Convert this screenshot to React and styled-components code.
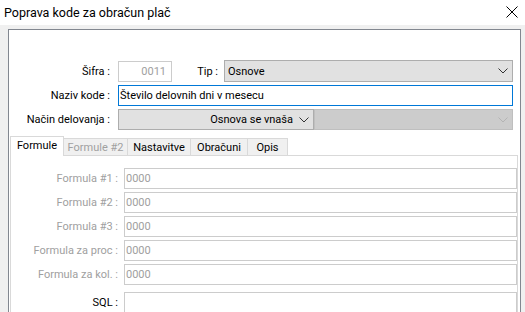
import React from 'react';
import styled, { createGlobalStyle } from 'styled-components';

const Global = createGlobalStyle`
  html, body { margin: 0; padding: 0; background: #f0f0f0; overflow: hidden; }
  body { font-family: Roboto, "Segoe UI", sans-serif; font-size: 11px; color: #000; }
  * { box-sizing: border-box; }
`;

const Window = styled.div`
  width: 525px;
  height: 312px;
  display: flex;
  flex-direction: column;
  background: #f0f0f0;
  overflow: hidden;
`;

const TitleBar = styled.div`
  height: 25px;
  flex-shrink: 0;
  background: #fff;
  display: flex;
  align-items: center;
  justify-content: space-between;
  padding: 0 7px 1px 4px;
`;

const Title = styled.span`
  font-size: 12.5px;
  color: #000;
`;

const Body = styled.div`
  flex: 1;
  min-height: 0;
  display: flex;
  flex-direction: column;
  padding: 4px 4px 0 8px;
`;

const Panel = styled.div`
  flex: 1;
  background: #fff;
  border: 1px solid #828790;
  border-bottom: none;
  padding-top: 30px;
  display: flex;
  flex-direction: column;
`;

const Form = styled.div`
  display: flex;
  flex-direction: column;
  gap: 3px;
  padding-right: 7px;
`;

const Row = styled.div`
  display: flex;
  align-items: center;
  height: ${p => p.$h || 21}px;
`;

const Label = styled.span`
  width: ${p => p.$w || 101}px;
  flex-shrink: 0;
  text-align: right;
  margin-right: ${p => p.$mr ?? 8}px;
  color: ${p => (p.$disabled ? '#a0a0a0' : '#000')};
  white-space: nowrap;
`;

const TextBox = styled.div`
  height: 21px;
  width: ${p => (p.$w ? `${p.$w}px` : 'auto')};
  flex: ${p => (p.$w ? '0 0 auto' : '1')};
  border: 1px solid ${p => (p.$focused ? '#0078d7' : '#cccccc')};
  background: #fff;
  display: flex;
  align-items: center;
  justify-content: ${p => (p.$right ? 'flex-end' : 'flex-start')};
  padding: 0 ${p => (p.$right ? 5 : 1)}px 0 1px;
  color: ${p => (p.$disabled ? '#a0a0a0' : '#000')};
  white-space: nowrap;
  overflow: hidden;
`;

const Combo = styled.div`
  height: ${p => p.$h || 21}px;
  width: ${p => (p.$w ? `${p.$w}px` : 'auto')};
  flex: ${p => (p.$w ? '0 0 auto' : '1')};
  border: 1px solid ${p => (p.$disabled ? '#bfbfbf' : '#adadad')};
  background: ${p => (p.$disabled ? '#cccccc' : '#e1e1e1')};
  display: flex;
  align-items: center;
  padding: 0 0 0 3px;
  color: #000;
  white-space: nowrap;
`;

const ComboText = styled.span`
  flex: 1;
  text-align: ${p => (p.$alignRight ? 'right' : 'left')};
  padding-right: ${p => (p.$alignRight ? 1 : 0)}px;
`;

const Arrow = styled.span`
  width: 19px;
  display: flex;
  justify-content: center;
  align-items: center;
`;

const Chevron = ({ color = '#333' }) => (
  <svg width="10" height="6" viewBox="0 0 10 6">
    <path d="M0.5 0.5 L5 5 L9.5 0.5" fill="none" stroke={color} strokeWidth="1" />
  </svg>
);

const Tabs = styled.div`
  margin: 6px 2px 0 1px;
  flex: 1;
  display: flex;
  flex-direction: column;
`;

const TabStrip = styled.div`
  display: flex;
  align-items: flex-end;
  height: 19px;
`;

const Tab = styled.div`
  width: ${p => p.$w}px;
  height: ${p => (p.$active ? 20 : 17)}px;
  margin-bottom: ${p => (p.$active ? -1 : 0)}px;
  margin-left: ${p => (p.$first ? 0 : -1)}px;
  position: relative;
  z-index: ${p => (p.$active ? 1 : 0)};
  background: ${p => (p.$active ? '#fff' : '#f0f0f0')};
  border: 1px solid #d9d9d9;
  border-bottom: none;
  display: flex;
  align-items: center;
  justify-content: center;
  padding-bottom: ${p => (p.$active ? 2 : 0)}px;
  color: ${p => (p.$disabled ? '#a0a0a0' : '#000')};
  white-space: nowrap;
`;

const TabPanel = styled.div`
  flex: 1;
  border: 1px solid #d9d9d9;
  border-bottom: none;
  background: #fff;
  padding-top: 12px;
  display: flex;
  flex-direction: column;
  gap: 3px;
`;

const FieldRow = styled.div`
  display: flex;
  align-items: center;
  height: 21px;
  margin-top: ${p => p.$mt || 0}px;
`;

const CloseIcon = () => (
  <svg width="12" height="12" viewBox="0 0 12 12">
    <path d="M0.5 0.5 L11.5 11.5 M11.5 0.5 L0.5 11.5" stroke="#000" strokeWidth="1" fill="none" />
  </svg>
);

const formulas = [
  'Formula #1 :',
  'Formula #2 :',
  'Formula #3 :',
  'Formula za proc :',
  'Formula za kol. :',
];

export default function App() {
  return (
    <>
      <Global />
      <Window>
        <TitleBar>
          <Title>Poprava kode za obračun plač</Title>
          <CloseIcon />
        </TitleBar>
        <Body>
          <Panel>
            <Form>
              <Row $h={22}>
                <Label>Šifra :</Label>
                <TextBox $w={54} $right $disabled>0011</TextBox>
                <Label $w={46} $mr={6}>Tip :</Label>
                <Combo $h={22}>
                  <ComboText>Osnove</ComboText>
                  <Arrow><Chevron /></Arrow>
                </Combo>
              </Row>
              <Row>
                <Label>Naziv kode :</Label>
                <TextBox $focused>Število delovnih dni v mesecu</TextBox>
              </Row>
              <Row>
                <Label>Način delovanja :</Label>
                <Combo $w={196}>
                  <ComboText $alignRight>Osnova se vnaša</ComboText>
                  <Arrow><Chevron /></Arrow>
                </Combo>
                <Combo $disabled>
                  <ComboText />
                  <Arrow><Chevron color="#b4b4b4" /></Arrow>
                </Combo>
              </Row>
            </Form>
            <Tabs>
              <TabStrip>
                <Tab $w={54} $active $first>Formule</Tab>
                <Tab $w={65} $disabled>Formule #2</Tab>
                <Tab $w={64}>Nastavitve</Tab>
                <Tab $w={58}>Obračuni</Tab>
                <Tab $w={41}>Opis</Tab>
              </TabStrip>
              <TabPanel>
                {formulas.map(f => (
                  <FieldRow key={f}>
                    <Label $w={107} $mr={6} $disabled>{f}</Label>
                    <TextBox $disabled>0000</TextBox>
                  </FieldRow>
                ))}
                <FieldRow $mt={4}>
                  <Label $w={107} $mr={6}>SQL :</Label>
                  <TextBox />
                </FieldRow>
              </TabPanel>
            </Tabs>
          </Panel>
        </Body>
      </Window>
    </>
  );
}
